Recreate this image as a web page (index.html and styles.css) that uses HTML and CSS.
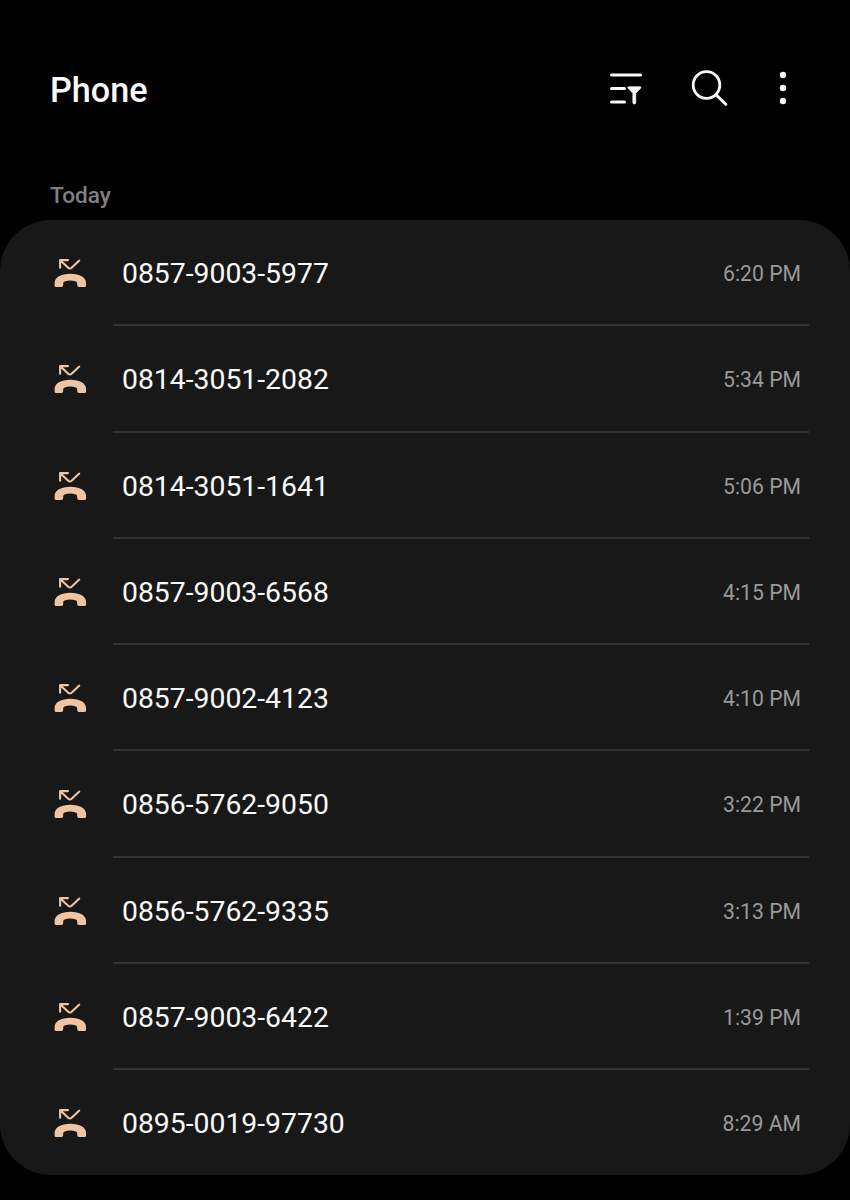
FILE: index.html
```html
<!DOCTYPE html>
<html lang="en">
<head>
    <meta charset="UTF-8">
    <meta name="viewport" content="width=device-width, initial-scale=1.0">
    <title>Phone</title>
    <link rel="stylesheet" href="styles.css">
</head>
<body>
    <svg class="sprite">
        <symbol id="missed" viewBox="0 0 34 32">
            <path d="M7.100 10.700V3.100h7.900M7.500 3.500l7.700 7.300q1.700 1.400 3.400 0L26.300 3.600" fill="none" stroke="currentColor" stroke-width="2.100" stroke-linecap="round" stroke-linejoin="round"/>
            <path d="M3.200 30h5.400q1.400 0 1.500-1.400l.2-2.600q.1-1.200 1.300-1.600q5.600-1.700 11.200 0q1.200.4 1.300 1.600l.2 2.600q.1 1.400 1.500 1.400h5.600q1.700 0 1.700-1.600v-2.200c0-6-6.500-9.400-15.700-9.400S1.600 20.200 1.600 26.200v2.200q0 1.600 1.600 1.600z" fill="currentColor"/>
        </symbol>
    </svg>

    <header class="header">
        <h1 class="title">Phone</h1>
        <div class="actions">
            <svg class="icon-filter" width="36" height="36" viewBox="0 0 36 36">
                <path d="M3.500 5h29M3.500 18.500h13M3.500 32h13" fill="none" stroke="#fafafa" stroke-width="3" stroke-linecap="round"/>
                <path d="M20.800 16.700h11.400q1.500 0 .5 1.500l-4.900 5v9.300q0 1.500-1.500 1.500t-1.500-1.500v-9.300l-4.700-5q-1.100-1.500.7-1.500z" fill="#fafafa" stroke="#fafafa" stroke-width=".6"/>
            </svg>
            <svg class="icon-search" width="40" height="40" viewBox="0 0 40 40">
                <circle cx="18.500" cy="17" r="13.300" fill="none" stroke="#fafafa" stroke-width="2.800"/>
                <path d="M28.300 27l9.500 9.300" stroke="#fafafa" stroke-width="3" stroke-linecap="round"/>
            </svg>
            <svg width="8" height="36" viewBox="0 0 8 36" fill="#fafafa">
                <circle cx="4" cy="5" r="3.200"/>
                <circle cx="4" cy="18" r="3.200"/>
                <circle cx="4" cy="31" r="3.200"/>
            </svg>
        </div>
    </header>

    <h2 class="day">Today</h2>

    <ul class="calls">
        <li class="call"><svg class="missed"><use href="#missed"/></svg><div class="info"><span class="number">0857-9003-5977</span><span class="time">6:20 PM</span></div></li>
        <li class="call"><svg class="missed"><use href="#missed"/></svg><div class="info"><span class="number">0814-3051-2082</span><span class="time">5:34 PM</span></div></li>
        <li class="call"><svg class="missed"><use href="#missed"/></svg><div class="info"><span class="number">0814-3051-1641</span><span class="time">5:06 PM</span></div></li>
        <li class="call"><svg class="missed"><use href="#missed"/></svg><div class="info"><span class="number">0857-9003-6568</span><span class="time">4:15 PM</span></div></li>
        <li class="call"><svg class="missed"><use href="#missed"/></svg><div class="info"><span class="number">0857-9002-4123</span><span class="time">4:10 PM</span></div></li>
        <li class="call"><svg class="missed"><use href="#missed"/></svg><div class="info"><span class="number">0856-5762-9050</span><span class="time">3:22 PM</span></div></li>
        <li class="call"><svg class="missed"><use href="#missed"/></svg><div class="info"><span class="number">0856-5762-9335</span><span class="time">3:13 PM</span></div></li>
        <li class="call"><svg class="missed"><use href="#missed"/></svg><div class="info"><span class="number">0857-9003-6422</span><span class="time">1:39 PM</span></div></li>
        <li class="call"><svg class="missed"><use href="#missed"/></svg><div class="info"><span class="number">0895-0019-97730</span><span class="time">8:29 AM</span></div></li>
    </ul>
</body>
</html>
```

FILE: styles.css
```css
* {
    margin: 0;
    padding: 0;
    box-sizing: border-box;
}

body {
    min-height: 100vh;
    background: #000;
    color: #fafafa;
    font-family: Roboto, sans-serif;
}

.sprite {
    display: none;
}

.header {
    display: flex;
    justify-content: space-between;
    align-items: center;
    height: 178px;
    padding: 0 63px 0 50px;
}

.title {
    padding-top: 1px;
    font-size: 34.2px;
    font-weight: 500;
}

.actions {
    display: flex;
    align-items: center;
    padding-bottom: 2px;
}

.icon-filter {
    margin-right: 44px;
}

.icon-search {
    margin-right: 51px;
}

.day {
    height: 42px;
    padding-left: 50px;
    color: #808080;
    font-size: 22.6px;
    font-weight: 500;
    line-height: 35px;
}

.calls {
    height: 954.5px;
    overflow: hidden;
    background: #181818;
    border-radius: 51px;
    list-style: none;
}

.call {
    display: flex;
    height: 106.25px;
    padding: 0 41px 0 53px;
}

.missed {
    flex: none;
    width: 34px;
    height: 32px;
    margin: 37px 26px 0 0;
    color: #f0c3a2;
}

.info {
    flex: 1;
    display: flex;
    justify-content: space-between;
    align-items: center;
    padding: 3px 8px 0 9px;
    border-bottom: 2px solid #333;
}

.call:last-child .info {
    border-bottom-color: transparent;
}

.number {
    font-size: 28.35px;
}

.time {
    color: #999;
    font-size: 21.2px;
}
```
